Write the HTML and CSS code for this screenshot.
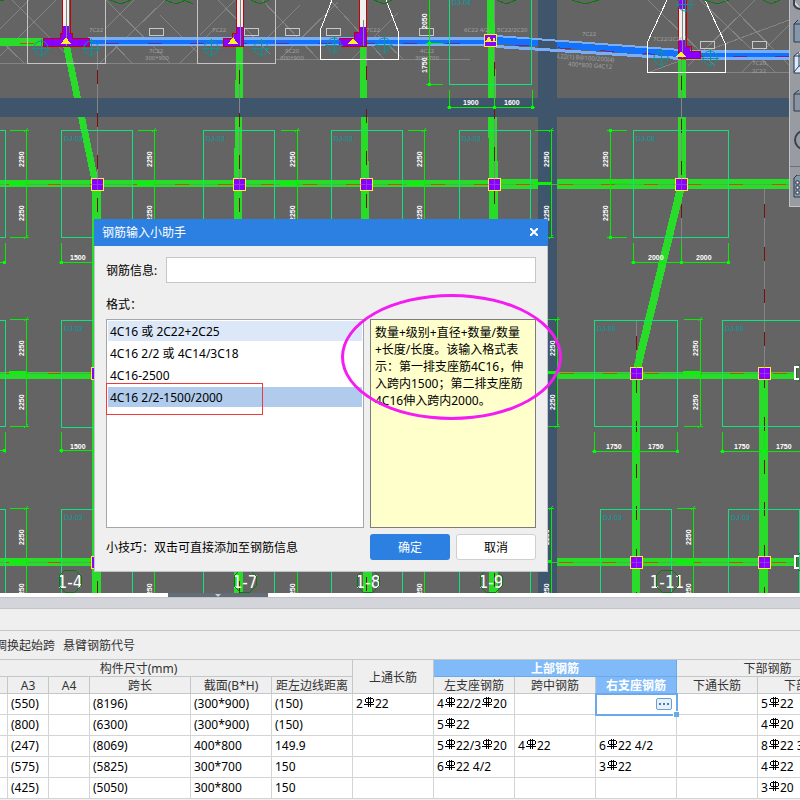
FILE: index.html
```html
<!DOCTYPE html>
<html lang="zh-CN">
  <head>
    <meta charset="UTF-8" />
    <meta name="viewport" content="width=device-width, initial-scale=1.0" />
    <title>钢筋输入小助手</title>
    <link rel="stylesheet" href="styles.css">
  </head>
  <body>
    <!-- 绘图区 -->
    <div class="workspace">
      <svg class="drawing" viewBox="0 0 800 593" preserveAspectRatio="xMinYMin slice">
        <defs>
          <rect id="column" class="column" x="-6" y="-6" width="12" height="12" />
          <g id="pile">
            <circle r="7" />
            <path d="M-9 0H9M0-9V9" />
          </g>
          <!-- 竖向尺寸 2250 + 2250 -->
          <g id="dim-v">
            <path class="dim" d="M0 0V107M-16 0H3M-16 107H3M-2 2L2-2M-2 109L2 105" />
            <path class="dim-thick" d="M-17 53H0" />
            <text class="dim-text" transform="translate(-2 37) rotate(-90)">2250</text>
            <text class="dim-text" transform="translate(-2 91) rotate(-90)">2250</text>
          </g>
          <g id="base">
            <rect class="base" width="71" height="107" />
            <text class="base-text" x="3" y="11">DJ-03</text>
          </g>
          <g id="tag"><rect class="tag" width="14" height="7" /></g>
          <g id="axis-ring"><path class="ring" d="M-5-11H5L11-5V5L5 11H-5L-11 5V-5Z" /></g>
        </defs>

        <rect class="ground" width="800" height="593" />

        <!-- 楼板斜线 -->
        <path class="hatch" d="M0 29L29 0M0 40L24 63M12 0L75 63M56 0L0 56M105 29L134 0M105 35L132 63M106 0L170 63M165 0L100 63M180 63L215 28M160 15L197 52M200 35L235 0M218 0L270 54M260 45L300 5M262 0L318 59M280 59L338 2M330 0L384 59M352 59L398 13M378 35L403 59M0 63H197M275 59H340M398 59H470M648 0L715 66M755 0L688 66M650 72L789 20M725 0L789 65M742 72L789 25M700 0L775 72M725 72H789" />

        <!-- 轴线 -->
        <path class="axis" d="M97 46V593M239 46V593M366 46V593M494 0V593M681 60V264M764 183V373M636 320V373" />

        <!-- 竖梁 -->
        <path class="beam" d="M63 46H70L99 183V178L101 183V593H92V183Z" />
        <path class="beam" d="M236 46H243L242 183L243 593H234L234 183Z" />
        <path class="beam" d="M360 46H366L369 183L372 593H363L361 183Z" />
        <path class="beam" d="M487 0H494L498 183V593H489L489 183Z" />
        <path class="beam" d="M678 60H686V183L640 373V593H632V373L678 183Z" />
        <path class="beam" d="M759 373H768V593H759Z" />

        <!-- 后浇带 -->
        <path class="strip" d="M0 98H789V117H0Z" />
        <path class="strip" d="M538 0H557V593H538Z" />

        <!-- 横梁 -->
        <path class="beam" d="M0 38H43V46H0ZM0 180H494V187H0ZM494 179H538V189H494ZM557 179H789V189H557ZM0 372H94V379H0ZM557 372H797V379H557ZM0 558H94V566H0ZM557 558H797V566H557Z" />
        <path class="beam-mid" d="M0 184H800M0 373H94M548 373H797M0 562H94M548 562H797" />
        <path class="dash-h" d="M5 184H789M5 373H94M560 373H797M5 562H94M559 562H797M20 43H43" />
        <path class="axis" d="M97 63V183M239 63V183M494 46V183M681 60V183" />
        <path class="dash-v" d="M97 70V593M239 70V593M366 66V593M494 62V593M681 76V264M764 204V593M636 336V593" />

        <!-- 蓝色选中梁 -->
        <path class="sel-edge" d="M88 37H484V46H88ZM686 50H789V60H686Z" />
        <path class="sel-edge" d="M496 35L681 49V51L496 37ZM496 45L681 57V60L496 48Z" />
        <path class="sel-beam" d="M88 40H484V44H88ZM496 37L538 40V46L496 44ZM557 42L681 51V57L557 48ZM686 53H789V57H686Z" />
        <path class="dash-p" d="M105 43H484M690 56H789" />
        <path class="dash-p" d="M515 45L681 56" />

        <!-- 剪力墙承台轮廓 -->
        <path class="cap dim-cap" d="M27 0V63H105V0M197 0V63H275V0" />
        <path class="cap" d="M332 0L320 31V59H398V31L386 0M667 0L647 43V72H725V43L705 0" />
        <path class="leaf" d="M0 1L4 0M110 0L121 4L131 0M165 0L176 4L186 0M184 0L193 4M251 0L260 4L269 0M374 0L384 4L392 0M497 0L506 4L516 0M572 0L585 4L599 0M705 0L717 4L729 0M763 0L771 4L780 0" />

        <g class="wall">
          <path class="white" d="M63 0H69V26H63ZM237 0H243V27H237ZM360 0H366V27H360ZM679 8H685V40H679Z" />
          <path class="purple" d="M63 26H69V33H72V38H89V46H43V38H60V33H63ZM237 27H243V46H223V38H234V33H237ZM360 27H366V46H339V39H354V33H360ZM679 40H685V47H690V51H700V58H679ZM679 0H685V9H679Z" />
          <path class="red" d="M62 0V33H60V38H43V46H89V38H72V33H70V0M236 0V33H232V38H223V46H243V0M359 0V32H354V38H339M340 46H366V0M678 0V58H700V51H691V46H686V0" />
          <path class="axis" d="M66 0V46M240 0V46M363 20V46M682 0V58" />
          <path class="yellow" d="M61 44L66 37L71 44ZM228 44L233 37L238 44ZM348 44L353 38L358 44ZM676 57L681 51L686 57Z" />
        </g>

        <g class="pile">
          <use href="#pile" x="41" y="48" />
          <use href="#pile" x="91" y="48" />
          <use href="#pile" x="211" y="48" />
          <use href="#pile" x="261" y="48" />
          <use href="#pile" x="334" y="45" />
          <use href="#pile" x="384" y="45" />
          <use href="#pile" x="661" y="58" />
          <use href="#pile" x="710" y="58" />
          <use href="#pile" x="685" y="4" />
        </g>

        <use href="#tag" x="149" y="28" />
        <use href="#tag" x="244" y="28" />
        <use href="#tag" x="285" y="28" />
        <use href="#tag" x="326" y="28" />
        <use href="#tag" x="419" y="28" />
        <use href="#tag" x="700" y="41" />
        <use href="#tag" x="752" y="41" />

        <g class="note">
          <text x="89" y="32">7C22</text>
          <text x="149" y="53">7C22</text>
          <text x="145" y="60">300*900</text>
          <text x="212" y="32">7C22</text>
          <text x="285" y="53">9C20</text>
          <text x="280" y="60">300*900</text>
          <text x="366" y="32">7C22</text>
          <text x="420" y="53">4C22</text>
          <text x="415" y="60">300*700</text>
          <text x="464" y="32">6C22 4/2</text>
          <text x="497" y="32">5C22/2C20</text>
          <text x="582" y="36">7C22</text>
          <text transform="translate(557 58) rotate(4)">L22(1) 8@100/200(4)</text>
          <text transform="translate(568 66) rotate(4)">400*800 G4C12</text>
          <text x="653" y="41">7C22/2C20</text>
          <text x="752" y="65">7C20</text>
          <text x="752" y="73">2C22</text>
        </g>

        <!-- 独立基础 -->
        <path class="base" d="M0 130H5V237H0M0 320H5V426H0M0 509H5V593M449 0V84H531V0M633 130H728V237H633ZM594 320H677V426H594ZM800 320H722V426H800" />
        <use href="#base" x="61" y="130" />
        <use href="#base" x="203" y="130" />
        <use href="#base" x="331" y="130" />
        <use href="#base" x="459" y="130" />
        <use href="#base" x="61" y="320" />
        <use href="#base" x="61" y="509" />
        <use href="#base" x="203" y="509" />
        <use href="#base" x="331" y="509" />
        <use href="#base" x="459" y="509" />
        <use href="#base" x="600" y="509" />
        <use href="#base" x="728" y="509" />
        <text class="base-text" x="452" y="5">DJ-04</text>
        <text class="base-text" x="636" y="141">DJ-08</text>
        <text class="base-text" x="597" y="331">DJ-09</text>
        <text class="base-text" x="725" y="331">DJ-09</text>

        <!-- 尺寸标注 -->
        <use href="#dim-v" x="26" y="130" />
        <use href="#dim-v" x="154" y="130" />
        <use href="#dim-v" x="297" y="130" />
        <use href="#dim-v" x="424" y="130" />
        <use href="#dim-v" x="551" y="130" />
        <use href="#dim-v" x="26" y="319" />
        <use href="#dim-v" x="557" y="319" />
        <use href="#dim-v" x="700" y="319" />
        <use href="#dim-v" x="26" y="508" />
        <use href="#dim-v" x="154" y="508" />
        <use href="#dim-v" x="297" y="508" />
        <use href="#dim-v" x="424" y="508" />
        <use href="#dim-v" x="551" y="508" />
        <use href="#dim-v" x="693" y="508" />
        <path class="dim" d="M610 130V237M607 130H627M607 237H627M610 183H627M429 0V84M426 84H443M426 43H443" />
        <path class="dim" d="M0 262H5M5 243V264M61 243V264M59 262H94M0 450H5M5 432V453M61 432V453M59 450H94" />
        <path class="dim" d="M449 90V109M494 98V109M532 90V109M447 107H535M633 243V264M681 243V264M728 243V264M631 262H730M594 432V453M636 432V453M677 432V453M592 451H679M722 432V453M764 432V453M720 451H800" />
        <path class="dot" d="M3 262h3M60 262h3M3 450h3M60 450h3M448 107h3M493 107h3M531 107h3M632 262h3M680 262h3M727 262h3M593 451h3M635 451h3M676 451h3M721 451h3M763 451h3M428 84h3M428 43h3M609 130h3M609 237h3" />
        <g class="dim-text">
          <text x="70" y="260">1500</text>
          <text x="70" y="449">1500</text>
          <text x="463" y="105">1900</text>
          <text x="504" y="105">1600</text>
          <text x="648" y="260">2000</text>
          <text x="696" y="260">2000</text>
          <text x="606" y="449">1750</text>
          <text x="648" y="449">1750</text>
          <text x="734" y="449">1750</text>
          <text x="776" y="449">1750</text>
          <text transform="translate(608 167) rotate(-90)">2250</text>
          <text transform="translate(608 221) rotate(-90)">2250</text>
          <text transform="translate(427 29) rotate(-90)">2050</text>
          <text transform="translate(427 73) rotate(-90)">1750</text>
        </g>

        <!-- 框架柱 -->
        <use href="#column" x="97" y="184" />
        <use href="#column" x="239" y="184" />
        <use href="#column" x="366" y="184" />
        <use href="#column" x="494" y="184" />
        <use href="#column" x="681" y="184" />
        <use href="#column" x="97" y="373" />
        <use href="#column" x="636" y="373" />
        <use href="#column" x="764" y="373" />
        <use href="#column" x="97" y="562" />
        <use href="#column" x="636" y="562" />
        <use href="#column" x="764" y="562" />
        <use href="#column" x="490" y="40" />
        <path class="yellow-fill" d="M485 42L489 36L492 42L494 37L496 42Z" />
        <path class="cross" d="M97 178V190M239 178V190M366 178V190M494 178V190M681 178V190M636 367V379M764 367V379M636 556V568M764 556V568M91 184H103M233 184H245M360 184H372M488 184H500M675 184H687M630 373H642M758 373H770M630 562H642M758 562H770" />

        <!-- 轴号 -->
        <g class="axis-name">
          <text x="70" y="588">1-4</text>
          <text x="245" y="588">1-7</text>
          <text x="368" y="588">1-8</text>
          <text x="491" y="588">1-9</text>
          <text x="667" y="588">1-11</text>
        </g>
        <use href="#axis-ring" x="70" y="581" />
        <use href="#axis-ring" x="245" y="581" />
        <use href="#axis-ring" x="368" y="581" />
        <use href="#axis-ring" x="491" y="581" />
        <use href="#axis-ring" x="667" y="581" />
        <use href="#axis-ring" x="807" y="373" />
        <use href="#axis-ring" x="807" y="562" />
        <path class="bracket" d="M799 367H795V379H799M799 556H795V568H799" />
      </svg>

      <!-- 右侧视图工具条 -->
      <div class="view-bar">
        <button aria-label="视图"><svg viewBox="0 0 11 24"><path d="M4 0V5Q6 9 11 9" fill="#d4d7dc" stroke="#39424e" stroke-width="2" /></svg></button>
        <button aria-label="实体"><svg viewBox="0 0 11 24"><path d="M4 4L10-2H20V22H4ZM4 4H14" fill="#8497ab" stroke="#2b3848" /></svg></button>
        <button aria-label="线框"><svg viewBox="0 0 11 24"><path d="M4 4L10-1H20V21H4ZM4 4H14M9 1V14L4 20M9 14H14" fill="#d8ebff" stroke="#2b3848" /></svg></button>
        <button aria-label="俯视"><svg viewBox="0 0 11 24"><path d="M4 4L10-1H20V21H4ZM4 4H14" fill="#8995a3" stroke="#2b3848" /></svg></button>
        <button aria-label="旋转"><svg viewBox="0 0 11 24"><circle cx="14" cy="12" r="9" fill="none" stroke="#39424e" stroke-width="2" /></svg></button>
        <button class="last" aria-label="显示设置"><svg viewBox="0 0 11 24"><path d="M4 3L7 0H20V22H4Z" fill="#8497ab" stroke="#2b3848" /><path d="M6 6h3v3h-3zM6 11h3v3h-3zM6 16h3v3h-3z" fill="#fff" stroke="#2b3848" /></svg></button>
      </div>

      <!-- 钢筋输入小助手窗口 -->
      <div class="dialog">
        <div class="dialog-title">
          <span>钢筋输入小助手</span>
          <button class="close" aria-label="关闭"><svg viewBox="0 0 8 8"><path d="M0 0L8 8M8 0L0 8" /></svg></button>
        </div>
        <div class="dialog-body">
          <div class="field">
            <label for="rebar-info">钢筋信息:</label>
            <input type="text" id="rebar-info" />
          </div>
          <p class="format-label">格式：</p>
          <div class="panels">
            <ul class="format-list">
              <li class="hover">4C16 或 2C22+2C25</li>
              <li>4C16 2/2 或 4C14/3C18</li>
              <li>4C16-2500</li>
              <li class="selected">4C16 2/2-1500/2000</li>
            </ul>
            <div class="format-help">数量+级别+直径+数量/数量<br />+长度/长度。该输入格式表<br />示：第一排支座筋4C16，伸<br />入跨内1500；第二排支座筋<br />4C16伸入跨内2000。</div>
          </div>
          <div class="dialog-footer">
            <p>小技巧：双击可直接添加至钢筋信息</p>
            <button class="ok">确定</button>
            <button class="cancel">取消</button>
          </div>
        </div>
        <div class="mark-box"></div>
        <div class="mark-ellipse"></div>
      </div>
    </div>

    <!-- 分隔条 -->
    <div class="splitter"><button aria-label="收起"></button></div>
    <div class="pane-title"></div>
    <div class="pane-gap"></div>

    <div class="table-tools">
      <button>调换起始跨</button>
      <button>悬臂钢筋代号</button>
    </div>

    <!-- 平法表格 -->
    <div class="table-wrap">
      <svg class="defs" width="0" height="0">
        <symbol id="rebar" viewBox="0 0 10 10">
          <path d="M2 1.5H9M2 5.5H9M1.5 2V5M9.5 2V5M4.5 0V10M6.5 0V10M0 7.5H10" />
        </symbol>
      </svg>
      <table>
        <colgroup>
          <col class="w-hidden" /><col class="w-a" /><col class="w-a" /><col class="w-span" />
          <col /><col /><col /><col /><col /><col /><col /><col class="w-span" />
        </colgroup>
        <thead>
          <tr>
            <th colspan="6">构件尺寸(mm)</th>
            <th rowspan="2">上通长筋</th>
            <th colspan="3" class="active">上部钢筋</th>
            <th colspan="2">下部钢筋</th>
          </tr>
          <tr>
            <th></th>
            <th>A3</th>
            <th>A4</th>
            <th>跨长</th>
            <th>截面(B*H)</th>
            <th>距左边线距离</th>
            <th>左支座钢筋</th>
            <th>跨中钢筋</th>
            <th class="active">右支座钢筋</th>
            <th>下通长筋</th>
            <th>下部钢筋</th>
          </tr>
        </thead>
        <tbody>
          <tr>
            <td></td><td>(550)</td><td></td><td>(8196)</td><td>(300*900)</td><td>(150)</td>
            <td>2<svg class="rebar"><use href="#rebar" /></svg>22</td>
            <td>4<svg class="rebar"><use href="#rebar" /></svg>22/2<svg class="rebar"><use href="#rebar" /></svg>20</td>
            <td></td>
            <td class="current"><button class="more" aria-label="更多"><svg viewBox="0 0 10 2"><path d="M0 0h2v2h-2zM4 0h2v2h-2zM8 0h2v2h-2z" /></svg></button></td>
            <td></td>
            <td>5<svg class="rebar"><use href="#rebar" /></svg>22</td>
          </tr>
          <tr>
            <td></td><td>(800)</td><td></td><td>(6300)</td><td>(300*900)</td><td>(150)</td>
            <td></td>
            <td>5<svg class="rebar"><use href="#rebar" /></svg>22</td>
            <td></td><td></td><td></td>
            <td>4<svg class="rebar"><use href="#rebar" /></svg>20</td>
          </tr>
          <tr>
            <td></td><td>(247)</td><td></td><td>(8069)</td><td>400*800</td><td>149.9</td>
            <td></td>
            <td>5<svg class="rebar"><use href="#rebar" /></svg>22/3<svg class="rebar"><use href="#rebar" /></svg>20</td>
            <td>4<svg class="rebar"><use href="#rebar" /></svg>22</td>
            <td>6<svg class="rebar"><use href="#rebar" /></svg>22 4/2</td>
            <td></td>
            <td>8<svg class="rebar"><use href="#rebar" /></svg>22 3/5</td>
          </tr>
          <tr>
            <td></td><td>(575)</td><td></td><td>(5825)</td><td>300*700</td><td>150</td>
            <td></td>
            <td>6<svg class="rebar"><use href="#rebar" /></svg>22 4/2</td>
            <td></td>
            <td>3<svg class="rebar"><use href="#rebar" /></svg>22</td>
            <td></td>
            <td>4<svg class="rebar"><use href="#rebar" /></svg>22</td>
          </tr>
          <tr>
            <td></td><td>(425)</td><td></td><td>(5050)</td><td>300*800</td><td>150</td>
            <td></td><td></td><td></td><td></td><td></td>
            <td>3<svg class="rebar"><use href="#rebar" /></svg>20</td>
          </tr>
        </tbody>
      </table>
    </div>
  </body>
</html>
```

FILE: styles.css
```css
/* 基本初始化 */
* {
  margin: 0;
  padding: 0;
  box-sizing: border-box;
}

body {
  font-family: "Noto Sans", "Noto Sans CJK SC", sans-serif;
  font-size: 12px;
  color: #000;
  background-color: #efefef;
  overflow: hidden;
}

button,
input {
  font: inherit;
  border: none;
}

/* 绘图区 */
.workspace {
  position: relative;
  height: 593px;
  overflow: hidden;
  background-color: #646464;
}

.drawing {
  display: block;
  width: 100%;
  height: 100%;
}

.drawing path,
.drawing rect {
  shape-rendering: crispEdges;
}

.ground {
  fill: #646464;
}

.hatch {
  fill: none;
  stroke: #848484;
}

.axis {
  fill: none;
  stroke: #858585;
}

.beam {
  fill: #2adc2a;
}

.beam-mid {
  stroke: #4cae4c;
}

.strip {
  fill: #3f556b;
}

.dash-h {
  stroke: #d84410;
  stroke-dasharray: 14 28.6;
}

.dash-v {
  stroke: #7d0f0f;
  stroke-dasharray: 14 28.6;
}

.dash-p {
  stroke: #6a2a90;
  stroke-dasharray: 14 28.6;
}

.sel-edge {
  fill: #78aef8;
}

.sel-beam {
  fill: #1072ff;
}

.cap {
  fill: none;
  stroke: #fff;
}

.dim-cap {
  stroke: #c4c4c4;
}

.leaf {
  fill: none;
  stroke: #0a7a0a;
}

.wall .white {
  fill: #f0f0f0;
}

.wall .purple {
  fill: #8a00ff;
}

.wall .red {
  fill: none;
  stroke: #c80000;
}

.wall .yellow,
.yellow-fill {
  fill: #ffee2a;
}

.pile {
  fill: none;
  stroke: #0f9494;
}

.tag {
  fill: none;
  stroke: #c8c8c8;
}

.note {
  font-size: 6px;
  fill: #a0a0a0;
}

.base {
  fill: none;
  stroke: #0ce57c;
}

.base-text {
  font-family: "Liberation Sans Narrow", "Liberation Sans", sans-serif;
  font-size: 7px;
  fill: #00a0a0;
}

.dim {
  fill: none;
  stroke: #00f000;
}

.dim-thick {
  stroke: #0cf00c;
  stroke-width: 3;
}

.dot {
  stroke: #00ff00;
  stroke-width: 3;
}

.dim-text {
  font-family: "Liberation Sans Narrow", "Liberation Sans", sans-serif;
  font-size: 7px;
  font-weight: bold;
  fill: #fff;
}

.column {
  fill: #8a00ff;
  stroke: #ffee2a;
}

.cross {
  stroke: #9a6ad8;
  opacity: 0.5;
}

.axis-name {
  font-family: "DejaVu Sans Condensed", "DejaVu Sans", sans-serif;
  font-size: 17px;
  text-anchor: middle;
  fill: #fff;
}

.ring {
  fill: none;
  stroke: #0a7a0a;
}

.bracket {
  fill: none;
  stroke: #fff;
  stroke-width: 2;
}

/* 右侧视图工具条 */
.view-bar {
  position: absolute;
  top: 0;
  right: 0;
  width: 11px;
  height: 207px;
  display: flex;
  flex-direction: column;
  gap: 8px;
  background-color: #989ca2;
  border-left: 1px solid #c0c3c8;
  border-bottom: 1px solid #c0c3c8;
  overflow: hidden;
}

.view-bar button {
  width: 11px;
  height: 24px;
  background: none;
  flex: none;
}

.view-bar button:first-child {
  height: 12px;
}

.view-bar svg {
  display: block;
  width: 11px;
  height: 24px;
}

.view-bar button:nth-child(4),
.view-bar button:nth-child(5) {
  margin-top: 6px;
}

.view-bar .last {
  margin-top: 6px;
  height: 34px;
  padding-top: 6px;
  border-top: 1px solid #6c7178;
}

/* 对话框 */
.dialog {
  position: absolute;
  left: 94px;
  top: 219px;
  width: 454px;
  background-color: #efefef;
  border: 1px solid #bfc4cc;
  border-top: none;
}

.dialog-title {
  display: flex;
  align-items: center;
  justify-content: space-between;
  height: 27px;
  margin: 0 -1px;
  padding: 0 10px 1px 8px;
  color: #fff;
  background-color: #2b80e2;
}

.close {
  display: flex;
  background: none;
}

.close svg {
  width: 8px;
  height: 8px;
  stroke: #fff;
  stroke-width: 2;
}

.dialog-body {
  padding: 11px;
}

.field {
  display: flex;
  align-items: center;
  gap: 9px;
}

.field label {
  width: 51px;
  white-space: nowrap;
}

.field input {
  flex: 1;
  height: 26px;
  padding: 0 4px;
  background-color: #fff;
  border: 1px solid #c4c6ca;
}

.format-label {
  margin: 13px 0 5px;
  line-height: 18px;
}

.panels {
  display: flex;
  gap: 6px;
  height: 209px;
}

.format-list {
  flex: 1;
  padding: 1px;
  list-style: none;
  background-color: #fff;
  border: 1px solid #a6a6a6;
}

.format-list li {
  height: 20px;
  margin-bottom: 2px;
  padding-left: 2px;
  line-height: 22px;
}

.format-list .hover {
  background-color: #dce8f8;
}

.format-list .selected {
  background-color: #b0cbec;
}

.format-help {
  width: 166px;
  padding: 4px;
  line-height: 17px;
  white-space: nowrap;
  background-color: #ffffcc;
  border: 1px solid #7c7c7c;
}

.dialog-footer {
  display: flex;
  align-items: center;
  gap: 6px;
  margin-top: 6px;
}

.dialog-footer p {
  flex: 1;
}

.dialog-footer button {
  width: 80px;
  height: 26px;
  border-radius: 3px;
}

.dialog-footer .ok {
  color: #fff;
  background-color: #2b80e2;
}

.dialog-footer .cancel {
  background-color: #fff;
  border: 1px solid #cfcfcf;
}

/* 批注 */
.mark-box {
  position: absolute;
  left: 11px;
  top: 164px;
  width: 157px;
  height: 32px;
  border: 1px solid #f03a3a;
}

.mark-ellipse {
  position: absolute;
  left: 246px;
  top: 75px;
  width: 221px;
  height: 126px;
  border: 3px solid #f41cf0;
  border-radius: 50%;
}

/* 分隔条 */
.splitter {
  height: 4px;
  padding-left: 168px;
  background-color: #fff;
}

.splitter button {
  display: block;
  width: 100px;
  height: 4px;
  background-color: #626d78;
}

.splitter button::after {
  content: "";
  display: block;
  width: 0;
  margin: 0 auto;
  border: 3px solid transparent;
  border-top-color: #c8ccd2;
  border-bottom: none;
}

.pane-title {
  height: 12px;
  background-color: #d4d5db;
  border-top: 1px solid #c2c4ca;
  border-bottom: 1px solid #c2c4ca;
}

.pane-gap {
  height: 22px;
  border-bottom: 1px solid #c4c6c8;
}

.table-tools {
  display: flex;
  gap: 8px;
  height: 28px;
  margin-left: -5px;
}

.table-tools button {
  color: #333;
  background: none;
}

/* 表格 */
.table-wrap {
  border-top: 1px solid #c4c6c8;
  overflow: hidden;
}

.defs {
  position: absolute;
}

table {
  width: 934px;
  margin-left: -75px;
  table-layout: fixed;
  border-collapse: separate;
  border-spacing: 0;
}

col {
  width: 81px;
}

.w-hidden {
  width: 83px;
}

.w-a {
  width: 41px;
}

.w-span {
  width: 101px;
}

th {
  height: 17px;
  padding-top: 2px;
  font-weight: normal;
  line-height: 14px;
  color: #333;
  white-space: nowrap;
  background-color: #efefef;
  border-right: 1px solid #c4c6c8;
  border-bottom: 1px solid #c4c6c8;
}

th.active {
  font-weight: bold;
  color: #fff;
  background-color: #80baf8;
  border-color: #6aaaea;
}

td {
  height: 21px;
  padding-left: 3px;
  line-height: 20px;
  white-space: nowrap;
  background-color: #fff;
  border-right: 1px solid #d2d4d6;
  border-bottom: 1px solid #d2d4d6;
}

.rebar {
  width: 10px;
  height: 10px;
  margin: 0 1px;
  vertical-align: 1px;
  fill: none;
  stroke: #000;
  shape-rendering: crispEdges;
}

/* 当前单元格 */
.current {
  position: relative;
  padding: 0 4px 0 0;
  outline: 2px solid #6aaaea;
  outline-offset: -1px;
}

.current::after {
  content: "";
  position: absolute;
  right: -3px;
  bottom: -3px;
  width: 5px;
  height: 5px;
  background-color: #6aaaea;
  border-top: 1px solid #fff;
  border-left: 1px solid #fff;
}

.more {
  display: flex;
  align-items: center;
  justify-content: center;
  width: 16px;
  height: 12px;
  margin-left: auto;
  background-color: #e6f1fc;
  border: 1px solid #6a9fd0;
  border-radius: 2px;
}

.more svg {
  width: 10px;
  height: 2px;
  fill: #4a7aa8;
}
```
